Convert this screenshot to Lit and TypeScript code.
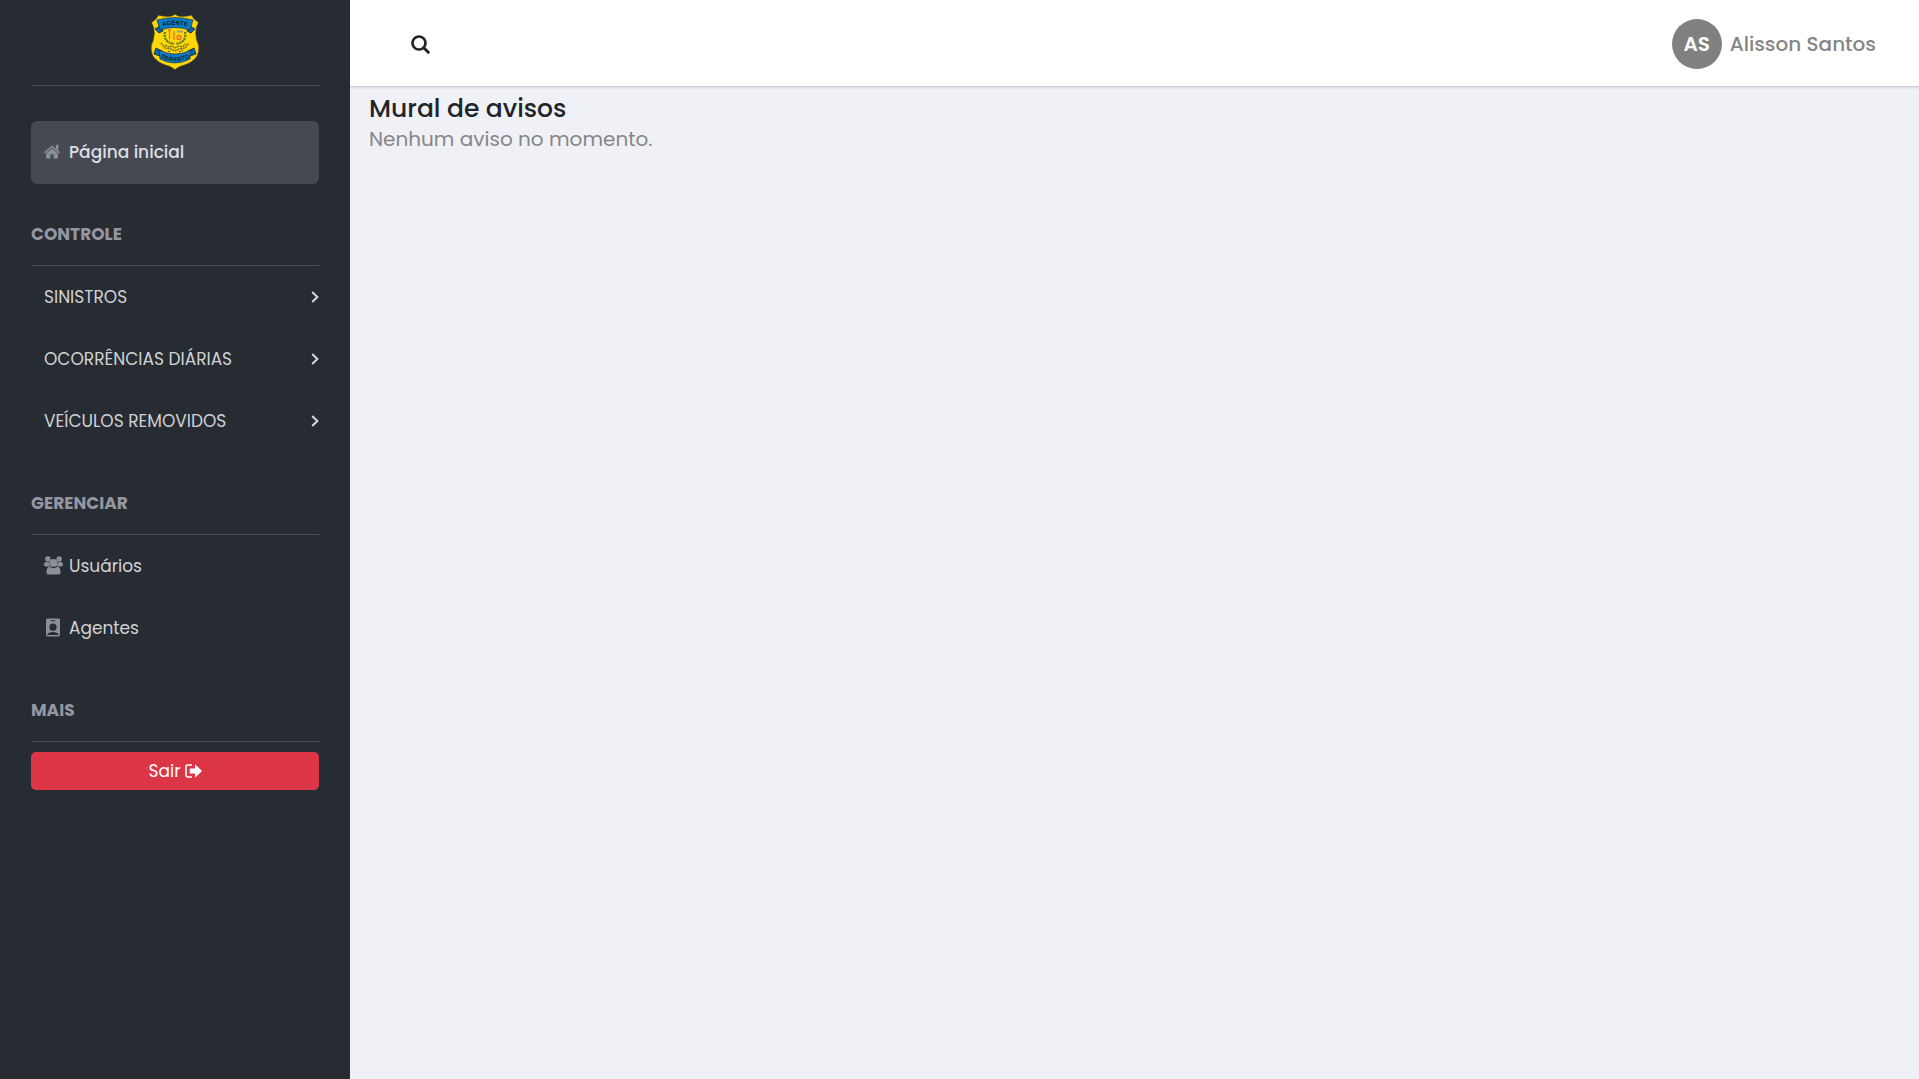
import { LitElement, html, css, svg } from "lit";
import { customElement } from "lit/decorators.js";

const homeIcon = html`<svg class="icon" width="19" height="19" viewBox="0 0 19 19" aria-hidden="true">
  <path d="M8 3.5 16 10.3 15 11.4 8 5.4 1 11.4 0 10.3Z" />
  <path d="M11.8 2.8h2.6v6l-2.6-2.2Z" />
  <path d="M8 6.6 13.9 11.6V15.6Q13.9 16.4 13.1 16.4H9.6V12.2H6.4V16.4H2.9Q2.1 16.4 2.1 15.6V11.6Z" />
</svg>`;

const usersIcon = html`<svg class="icon" width="19" height="19" viewBox="0 0 19 19" aria-hidden="true">
  <circle cx="3.9" cy="3" r="2.7" />
  <circle cx="15.1" cy="3" r="2.7" />
  <path d="M2.5 5.9Q4.5 6.8 5.6 5.7A4.6 4.6 0 0 0 6.4 10.6H2Q0 10.6 0 8.6 0 6.6 1.4 5.9Z" />
  <path d="M16.5 5.9Q14.5 6.8 13.4 5.7A4.6 4.6 0 0 1 12.6 10.6H17Q19 10.6 19 8.6 19 6.6 17.6 5.9Z" />
  <circle cx="9.5" cy="6.9" r="3.9" />
  <path d="M5.8 10.8Q9.5 13.6 13.2 10.8 16.6 11.4 16.6 16 16.6 18.6 14 18.6H5Q2.4 18.6 2.4 16 2.4 11.4 5.8 10.8Z" />
</svg>`;

const badgeIcon = html`<svg class="icon" width="19" height="19" viewBox="0 0 19 19" aria-hidden="true">
  <path
    fill-rule="evenodd"
    d="M3.6 .4H14.4Q16 .4 16 2V16.8Q16 18.4 14.4 18.4H3.6Q2 18.4 2 16.8V2Q2 .4 3.6 .4ZM6.8 2.3V3.2H11.2V2.3ZM9 5.6A3.6 3.6 0 1 0 9 12.8 3.6 3.6 0 1 0 9 5.6ZM3.4 16.9H14.6V16Q12.5 14 9 14 5.5 14 3.4 16Z"
  />
</svg>`;

const chevronIcon = html`<svg class="chevron" width="8" height="12" viewBox="0 0 8 12" aria-hidden="true">
  <path d="M1.2 1 6.4 6 1.2 11" />
</svg>`;

const exitIcon = html`<svg class="exit" width="17" height="14" viewBox="0 0 17 14" aria-hidden="true">
  <path d="M7 1H3Q1 1 1 3V11Q1 13 3 13H7" fill="none" stroke="currentColor" stroke-width="1.6" />
  <path d="M4.8 4.5H10V1.1Q10 .2 10.8 .9L16.5 6.4Q17 7 16.5 7.6L10.8 13.1Q10 13.8 10 12.9V9.5H4.8Z" fill="currentColor" />
</svg>`;

const searchIcon = html`<svg width="19" height="19" viewBox="0 0 19 19" aria-hidden="true">
  <circle cx="8" cy="8" r="6.5" fill="none" stroke="currentColor" stroke-width="2.7" />
  <path d="M12.7 12.7 17.3 17.3" stroke="currentColor" stroke-width="3" stroke-linecap="round" />
</svg>`;

const ribbonTop = svg`
  <path d="M4 15 9 12 12 17 8 19ZM44 15 39 12 36 17 40 19Z" fill="#0968a9" stroke="#12202c" stroke-width=".8" />
  <path d="M6 6Q24 1 42 6L39 16Q24 11 9 16Z" fill="#0b7cc8" stroke="#12202c" stroke-width=".6" />`;
const ribbonBottom = svg`
  <path d="M5 34 11 37 9 42 3 40ZM43 34 37 37 39 42 45 40Z" fill="#0968a9" stroke="#12202c" stroke-width=".8" />
  <path d="M8 36Q24 44 40 36L39 45Q24 53 9 45Z" fill="#0b7cc8" stroke="#12202c" stroke-width=".6" />`;

const crest = html`<svg class="crest" width="48" height="56" viewBox="0 0 48 56" role="img" aria-label="Agente Trânsito">
  <path
    d="M24 .4Q27 2.8 31 2.7 36 2.5 40.5 1.6 42.5 6 47.3 8.5 44.5 13 44.5 19 44.8 26 47.4 31 48.4 39 44.5 44 40 49 33 51 27 52.5 24 55.6 21 52.5 15 51 8 49 3.5 44-.4 39 .6 31 3.2 26 3.5 19 3.5 13 .7 8.5 5.5 6 7.5 1.6 12 2.5 17 2.7 21 2.8 24 .4Z"
    fill="#fed60a"
    stroke="#80701e"
    stroke-width=".5"
  />
  ${ribbonTop} ${ribbonBottom}
  <path id="arc-top" d="M9 12.8Q24 8.8 39 12.8" fill="none" />
  <path id="arc-bottom" d="M9 43.6Q24 50.6 39 43.6" fill="none" />
  <text class="crest-text"><textPath href="#arc-top" startOffset="50%">AGENTE</textPath></text>
  <text class="crest-text"><textPath href="#arc-bottom" startOffset="50%">TRÂNSITO</textPath></text>
  <path d="M14 18Q12 28 23 30M34 18Q36 28 25 30" fill="none" stroke="#557f24" stroke-width="2.2" stroke-dasharray="2.2 .7" />
  <path d="M18.5 15V25M17 16.5H20M23 17V26" stroke="#e56a22" stroke-width="1.2" fill="none" />
  <path d="M26 17.5H32" stroke="#a5a17c" stroke-width="2" />
  <circle cx="28" cy="23.5" r="2" fill="#f4bd20" stroke="#ee6a1f" stroke-width="1.3" />
  <path d="M10 29 14 34 20 35 24 37 28 35 34 34 38 29M14 31 18 33 21 32 24 34 28 32 31 33 35 30M17 37 20 38M28 38 32 36" fill="none" stroke="#6d621c" stroke-width="1.3" stroke-dasharray="2 .8" />
</svg>`;

@customElement("app-root")
export class AppRoot extends LitElement {
  static styles = css`
    :host {
      display: flex;
      min-height: 100vh;
      background: #f0f1f7;
      color: #212529;
      font-family: Poppins, Inter, "Open Sans", sans-serif;
      font-size: 17px;
      line-height: 24px;
    }
    *,
    *::before,
    *::after {
      box-sizing: border-box;
    }
    h1,
    h2,
    p,
    ul {
      margin: 0;
      padding: 0;
    }
    button {
      font: inherit;
      cursor: pointer;
      border: 0;
    }
    .sidebar {
      flex: none;
      width: 350px;
      padding: 0 31px;
      background: #272b32;
    }
    .brand {
      display: flex;
      justify-content: center;
      padding: 14px 0 15px;
      border-bottom: 1px solid #4a4e54;
    }
    .crest {
      display: block;
    }
    .crest-text {
      fill: #10202d;
      font-family: "Liberation Sans", sans-serif;
      font-size: 6px;
      font-weight: 700;
      text-anchor: middle;
    }
    .nav {
      padding-top: 35px;
    }
    .list {
      padding-bottom: 1px;
      list-style: none;
    }
    .link {
      display: flex;
      align-items: center;
      gap: 6px;
      width: 100%;
      height: 62px;
      padding: 0 0 1px 13px;
      border-radius: 6px;
      background: none;
      color: #d1d2d5;
      text-align: left;
      text-decoration: none;
    }
    .link.active {
      height: 63px;
      padding-bottom: 2px;
      background: #464a50;
      color: #dcdeea;
      font-weight: 500;
    }
    .link.group {
      justify-content: space-between;
      padding-bottom: 0;
    }
    .icon {
      flex: none;
      fill: #899097;
    }
    .chevron {
      fill: none;
      stroke: #d8d9db;
      stroke-width: 2;
    }
    .heading {
      margin-top: 38px;
      padding-bottom: 19px;
      border-bottom: 1px solid #4a4c50;
      color: #9496a1;
      font-size: 17px;
      font-weight: 700;
      line-height: 24px;
    }
    .logout {
      display: flex;
      align-items: center;
      justify-content: center;
      gap: 4px;
      width: 100%;
      height: 38px;
      margin-top: 10px;
      border-radius: 5px;
      background: #dc3545;
      color: #fff;
    }
    .page {
      flex: 1;
      min-width: 0;
    }
    .topbar {
      display: flex;
      align-items: center;
      justify-content: space-between;
      padding: 19px 43px 17px 61px;
      background: #fff;
      border-bottom: 1px solid #cfd0d4;
      box-shadow: 0 1px 2px #0000001a;
    }
    .search {
      display: flex;
      padding: 0;
      background: none;
      color: #212529;
    }
    .user {
      display: flex;
      align-items: center;
      gap: 8px;
      color: #858585;
      font-size: 20px;
      font-weight: 500;
      text-decoration: none;
    }
    .avatar {
      display: grid;
      place-items: center;
      width: 50px;
      height: 50px;
      border-radius: 50%;
      background: #808080;
      color: #fff;
      font-weight: 600;
    }
    .content {
      padding: 7px 19px;
    }
    .title {
      font-size: 25px;
      font-weight: 500;
      line-height: 30px;
    }
    .empty {
      color: #868686;
      font-size: 20px;
      line-height: 30px;
    }
  `;

  private groups = ["SINISTROS", "OCORRÊNCIAS DIÁRIAS", "VEÍCULOS REMOVIDOS"];

  render() {
    return html`
      <aside class="sidebar">
        <div class="brand">${crest}</div>
        <nav class="nav">
          <a class="link active" href="#inicio" aria-current="page">${homeIcon}<span>Página inicial</span></a>
          <h2 class="heading">CONTROLE</h2>
          <ul class="list">
            ${this.groups.map(
              (name) => html`<li>
                <button class="link group" type="button" aria-expanded="false"><span>${name}</span>${chevronIcon}</button>
              </li>`
            )}
          </ul>
          <h2 class="heading">GERENCIAR</h2>
          <ul class="list">
            <li><a class="link" href="#usuarios">${usersIcon}<span>Usuários</span></a></li>
            <li><a class="link" href="#agentes">${badgeIcon}<span>Agentes</span></a></li>
          </ul>
          <h2 class="heading">MAIS</h2>
          <button class="logout" type="button"><span>Sair</span>${exitIcon}</button>
        </nav>
      </aside>
      <div class="page">
        <header class="topbar">
          <button class="search" type="button" aria-label="Pesquisar">${searchIcon}</button>
          <a class="user" href="#perfil"><span class="avatar">AS</span><span>Alisson Santos</span></a>
        </header>
        <main class="content">
          <h1 class="title">Mural de avisos</h1>
          <p class="empty">Nenhum aviso no momento.</p>
        </main>
      </div>
    `;
  }
}
